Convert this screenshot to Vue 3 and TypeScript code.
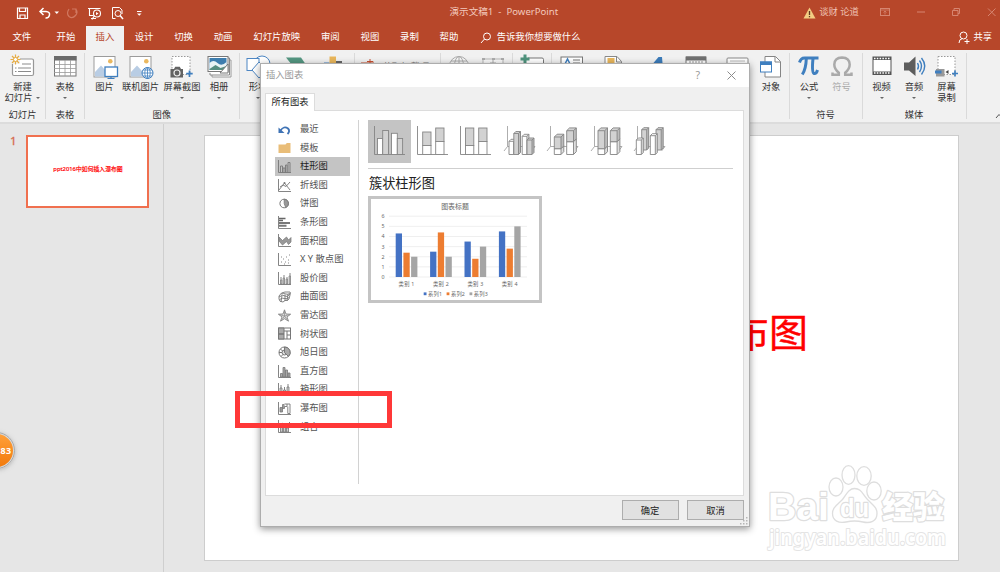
<script setup lang="ts">
interface RibbonItem {
  label: string[]
  icon: string
  width: number
  caret?: 'below' | 'inline'
  dim?: boolean
}
interface RibbonGroup {
  name: string
  width: number
  pad?: number
  items: RibbonItem[]
}

const tabs: string[] = ['文件', '开始', '插入', '设计', '切换', '动画', '幻灯片放映', '审阅', '视图', '录制', '帮助']

const groups: RibbonGroup[] = [
  { name: '幻灯片', width: 46, items: [{ label: ['新建', '幻灯片'], icon: 'newSlide', width: 45, caret: 'inline' }] },
  { name: '表格', width: 39, items: [{ label: ['表格'], icon: 'table', width: 38, caret: 'below' }] },
  {
    name: '图像', width: 154.5, pad: 2.5, items: [
      { label: ['图片'], icon: 'picture', width: 34 },
      { label: ['联机图片'], icon: 'onlinePicture', width: 38 },
      { label: ['屏幕截图'], icon: 'screenshot', width: 45, caret: 'below' },
      { label: ['相册'], icon: 'album', width: 29, caret: 'below' },
    ],
  },
  {
    name: '插图', width: 115, items: [
      { label: ['形状'], icon: 'shapes', width: 37, caret: 'below' },
      { label: ['SmartArt'], icon: 'smartArt', width: 40 },
      { label: ['图表'], icon: 'chart', width: 37 },
    ],
  },
  { name: '加载项', width: 86, pad: 4, items: [{ label: [], icon: 'store', width: 24 }] },
  {
    name: '链接', width: 72, items: [
      { label: ['链接'], icon: 'globe', width: 36, dim: true },
      { label: ['动作'], icon: 'action', width: 33, dim: true },
    ],
  },
  { name: '批注', width: 39, items: [{ label: ['批注'], icon: 'comment', width: 38 }] },
  {
    name: '文本', width: 238, items: [
      { label: ['文本框'], icon: 'textBox', width: 41, caret: 'below' },
      { label: ['页眉'], icon: 'header', width: 40 },
      { label: ['艺术字'], icon: 'wordArt', width: 42, caret: 'below' },
      { label: ['日期'], icon: 'date', width: 42 },
      { label: ['编号'], icon: 'number', width: 41 },
      { label: ['对象'], icon: 'object', width: 27 },
    ],
  },
  {
    name: '符号', width: 73, pad: 3.5, items: [
      { label: ['公式'], icon: 'pi', width: 32, caret: 'below' },
      { label: ['符号'], icon: 'omega', width: 33, dim: true },
    ],
  },
  {
    name: '媒体', width: 104, pad: 3, items: [
      { label: ['视频'], icon: 'video', width: 32, caret: 'below' },
      { label: ['音频'], icon: 'audio', width: 33, caret: 'below' },
      { label: ['屏幕', '录制'], icon: 'record', width: 32 },
    ],
  },
]

const landscape = '<rect x="1" y="1.5" width="21" height="20.5" fill="#fff" stroke="#9b9b9b"/><path d="M2 21.5V17l6-6.5 5 5.5v5.5z" fill="#b9cde4"/><circle cx="17.3" cy="6.2" r="2.3" fill="#eab85f"/>'

const ribbonIcons: Record<string, string> = {
  newSlide: '<rect x="1.5" y="4" width="21" height="16.5" rx="1.5" fill="#fff" stroke="#979797" stroke-width="1.2"/><path d="M11 9h9M7 13h13M7 16.5h13M4 13h1.5M4 16.5h1.5" stroke="#8b8b8b"/><rect x="0" y="0" width="9" height="9" fill="#f1f1f1"/><path d="M4.500-.5v10M-.5 4.500h10M1 1l7 7M8 1L1 8" stroke="#e6ac44" stroke-width="1.200"/><circle cx="4.500" cy="4.500" r="2" fill="#fff" stroke="#e6ac44"/>',
  table: '<rect x="1.500" y="1.500" width="21.500" height="19.500" fill="#fff" stroke="#777"/><rect x="1" y="1" width="22.500" height="4.500" fill="#6a6a6a"/><path d="M1 9.500h22M1 13.500h22M1 17.500h22M6.500 5v16M12 5v16M17.500 5v16" stroke="#999" stroke-width=".8"/>',
  picture: landscape + '<rect x="12" y="12" width="12.500" height="9.500" fill="#fff" stroke="#3f7fbf" stroke-width="1.300"/><path d="M18 21v2.500M14.500 23.500h7" stroke="#3f7fbf" stroke-width="1.200"/>',
  onlinePicture: landscape + '<circle cx="18.500" cy="18" r="5.500" fill="#fff" stroke="#3f7fbf"/><path d="M18.500 12.500v11M13 18h11M14 15h9M14 21h9" stroke="#3f7fbf" stroke-width=".8"/><ellipse cx="18.500" cy="18" rx="2.700" ry="5.500" fill="none" stroke="#3f7fbf" stroke-width=".8"/>',
  screenshot: '<rect x="2" y="1.500" width="18" height="18" fill="#fff" stroke="#999" stroke-dasharray="1.500 1.500"/><path d="M.5 14h3.500l1.200-2.200h4.600L11 14h2v8.500H.5z" fill="#636363"/><circle cx="7" cy="18" r="3" fill="#636363" stroke="#eee" stroke-width="1.200"/><path d="M19.500 15.500v6.500M16.200 18.700h6.500" stroke="#3f7fbf" stroke-width="1.700"/>',
  album: '<path d="M22 5h2v17H5v-2" fill="#fff" stroke="#999"/><path d="M21 3h1.500v17H3v-2" fill="#fff" stroke="#888"/><rect x="1" y="1.500" width="20" height="15" fill="#fff" stroke="#777"/><rect x="2.500" y="3" width="17" height="12" fill="#3d7dae"/><path d="M2.500 8q4-4 8 0t9-1v8h-17z" fill="#e9f2f4"/><path d="M2.500 14l6-4 5 3 6-2v4h-17z" fill="#578d80"/><path d="M13 18l8-9v9z" fill="#fff" stroke="#777"/>',
  shapes: '<circle cx="16" cy="9" r="8" fill="#fff" stroke="#4d86c3"/><rect x="1" y="3.500" width="12" height="12" fill="#fff" stroke="#4d86c3"/><path d="M13 7l8 8-8 8-7-8z" fill="#fff" stroke="#4d86c3"/>',
  smartArt: '<path d="M1 2.500h15l5.500 8L16 18H1l6-8z" fill="#549681"/>',
  chart: '<path d="M1 7.500h5.500V22H1z" fill="#4d86c3"/><path d="M6.500 1.500h6.500V22H6.500z" fill="#e9b65b"/><path d="M13 6h6v16h-6z" fill="#666"/>',
  store: '<rect x="2.500" y="8" width="10" height="9" fill="#fff" stroke="#c85132"/><path d="M8 6.500h6v6M11 4v6" fill="none" stroke="#c85132"/>',
  globe: '<circle cx="12" cy="11" r="9.500" fill="#f7f7f7" stroke="#aaa"/><path d="M12 1.500v20M2.500 11h19M4 6h16" stroke="#aaa"/><ellipse cx="12" cy="11" rx="4.500" ry="9.500" fill="none" stroke="#aaa"/>',
  action: '<rect x="2" y="4" width="20" height="16" fill="#f8f8f8" stroke="#b5b5b5"/><path d="M1 3h3v2H1zM20 3h3v2h-3zM11 3h3v2h-3z" fill="#aaa"/><path d="M12 5v6M9 8h6" stroke="#aaa"/>',
  comment: '<path d="M8 3h14q1.500 0 1.500 1.500V18H4V9" fill="#fff" stroke="#777"/><path d="M5 -.5v9M.5 4h9" stroke="#4e927c" stroke-width="3"/>',
  textBox: '<rect x="1" y="2" width="21.500" height="18" fill="#fff" stroke="#777"/><path d="M4.500 10L7.500 4l3 6" fill="none" stroke="#3f7fbf" stroke-width="1.500"/><path d="M13 5h7M13 8h7" stroke="#777"/>',
  header: '<path d="M4 1.500h12l4.500 5V22H4z" fill="#fff" stroke="#888"/><rect x="6.500" y="3" width="7" height="5" fill="#e9b65b"/><path d="M15.500 2v5h5" fill="none" stroke="#888"/>',
  wordArt: '<path d="M3 18L16.500 2h3.500l1.500 18h-4l-1-12L8 18z" fill="#3c7cba"/>',
  date: '<rect x="2" y="2" width="20" height="18" fill="#fff" stroke="#777"/><rect x="2" y="1.500" width="20" height="4" fill="#707070"/><path d="M5 7h14" stroke="#999" stroke-dasharray="2 1"/>',
  number: '<rect x="2" y="3" width="21" height="17" rx="1" fill="#fff" stroke="#888"/><path d="M5 6h15" stroke="#bbb"/>',
  object: '<path d="M6 1.500h10.500l5 5V22H6z" fill="#fff" stroke="#858585"/><path d="M16 2v5h5" fill="none" stroke="#858585"/><rect x="1.500" y="7" width="11" height="10" fill="#fff" stroke="#3f7fbf"/><rect x="1" y="6.500" width="12" height="3.500" fill="#3f7fbf"/>',
  pi: '<path d="M2.500 7.500Q3.800 3 7.500 3H21.500" fill="none" stroke="#3f7fbf" stroke-width="3"/><path d="M9.300 3.500Q9 14 5.300 19.500M16 3.500Q14.500 18 17 18.500q2.300.7 3.500-3.500" fill="none" stroke="#3f7fbf" stroke-width="3"/>',
  omega: '<path d="M2.500 17.500v2.200h6.300v-2Q4.300 14 4.300 9.500 4.500 2.700 12 2.500q7.500.2 7.700 7 0 4.500-4.500 8.200v2h6.300v-2.200" fill="none" stroke="#aaa" stroke-width="2.500"/>',
  video: '<rect x="3" y="2" width="18" height="17.500" fill="#fff" stroke="#555"/><path d="M3 3.500h18M3 18h18" stroke="#555" stroke-width="3"/><path d="M4 3.500h16M4 18h16" stroke="#fff" stroke-width="1.400" stroke-dasharray="1.500 1.300"/>',
  audio: '<path d="M2 7.500h5L13.500 1.500v19.500L7 15.500H2z" fill="#5d5d5d"/><path d="M15.500 8q2 3.200 0 6.500M17.500 5.500q4 5.500 0 11.500M19.500 3q6.500 8 0 16.500" fill="none" stroke="#3f7fbf" stroke-width="1.400"/>',
  record: '<rect x="3" y="1.500" width="17" height="18" fill="#fff" stroke="#999" stroke-dasharray="1.500 1.500"/><rect x="1" y="14" width="8.500" height="7.500" fill="#999"/><rect x="0" y="15.500" width="6.500" height="3" fill="#3f7fbf"/><path d="M13.500 15v4l-3-2z" fill="#444"/><path d="M20 15.500v6M17 18.500h6" stroke="#3f7fbf" stroke-width="1.700"/>',
}

const ax = '<path d="M.5 0v12.500H13" fill="none" stroke="#777" stroke-width=".9"/>'

const chartKinds: { name: string; icon: string }[] = [
  { name: '最近', icon: '<path d="M2.500 7.500Q6 2.500 10 5.500q2.500 2.500-.5 5.500" fill="none" stroke="#3f73b5" stroke-width="1.800"/><path d="M.5 4.500v5.500h6z" fill="#3f73b5"/>' },
  { name: '模板', icon: '<path d="M.5 3.500h7l1.300-1.500h3.700V12H.5z" fill="#e9bd78"/>' },
  { name: '柱形图', icon: ax + '<path d="M2.500 12.500V6h2v6.500M5 12.500V8h2v4.500M7.500 12.500V5h1.500v7.500M10 12.500V2.500h2v10" fill="none" stroke="#777" stroke-width=".9"/>' },
  { name: '折线图', icon: ax + '<path d="M1 11l5.500-7 5.500 7M2 8l3-2 3 1.500L12 3" fill="none" stroke="#777" stroke-width=".9"/><circle cx="6.500" cy="4" r="1" fill="#777"/>' },
  { name: '饼图', icon: '<circle cx="6.200" cy="6.500" r="4.300" fill="#fff" stroke="#777"/><path d="M6.200 2.200a4.300 4.300 0 0 1 1.500 8.300l-1.500-4z" fill="#999" stroke="#777" stroke-width=".8"/>' },
  { name: '条形图', icon: ax + '<path d="M1 2.500h6.500M1 4.500h4" stroke="#666" stroke-width="1.500"/><path d="M1 7h11M1 9.800h7.500" stroke="#777" stroke-width="2"/>' },
  { name: '面积图', icon: ax + '<path d="M1 3l3.500 3.500L8.500 3l2 3L13 3.500V8l-2.500 2.500L8.500 7.500l-4 3.500L1 7z" fill="#999" stroke="#777" stroke-width=".7"/>' },
  { name: 'X Y 散点图', icon: ax + '<path d="M3 9h1M5 6h1M7 9h1M8 4h1M10 7h1M11 2h1M3 4h1M6 11h1M10 10h1" stroke="#888" stroke-width="1.100"/>' },
  { name: '股价图', icon: ax + '<path d="M3 5v7M6 3v9M9 5v7M12 1v11" stroke="#777" stroke-width=".9"/><path d="M2.500 8h1.500v4H2.500zM5 6h1.500v6H5zM8 7h1.500v5H8zM11 4h1.500v8H11z" fill="#bbb" stroke="#777" stroke-width=".6"/>' },
  { name: '曲面图', icon: '<path d="M1 6Q3 2 7 2h5q1 0 0 3l-1 4q-1 2-4 1.500L5 12Q1 12 1 9zM1 7q4-3 6-1t5-2M3 4q3-1 5 0t4-1M4 5.500L3 12M7 4.500L7 11M10 4l-1 7M1.500 9.500q3-2 5.500-1t4-1" fill="none" stroke="#777" stroke-width=".9"/>' },
  { name: '雷达图', icon: '<path d="M6.500.8l1.500 4.200 4.700.2-3.700 2.700 1.500 4.300-4-2.500-4 2.500L4 7.900.3 5.200 5 5z" fill="#ddd" stroke="#888" stroke-width=".9"/><path d="M6.500 1v6l5.500-1.500M6.500 7L10 12M6.500 7L3 12M6.500 7L1 5.500" fill="none" stroke="#888" stroke-width=".7"/>' },
  { name: '树状图', icon: '<rect x=".5" y="1" width="12" height="11" fill="#fff" stroke="#777"/><path d="M.5 1h5.500v6H.5zM.5 7h5.500v5H.5z" fill="#aaa" stroke="#777"/><path d="M6 4h6.500M9 4v8M9 8h3.500" stroke="#777"/>' },
  { name: '旭日图', icon: '<circle cx="6.500" cy="6.500" r="5.500" fill="#fff" stroke="#777"/><circle cx="6.500" cy="6.500" r="2.500" fill="#ddd" stroke="#777"/><path d="M6.500 1a5.500 5.500 0 0 1 4 9.500L6.500 6.500zM1 6.500h3M3 10.500l2-2M2.500 3l2 2" fill="#aaa" stroke="#777"/>' },
  { name: '直方图', icon: ax + '<path d="M2.500 12V8.500h2V12zM5 12V2.500h2V12zM7.500 12V5h2V12zM10 12V8h2v4z" fill="#aaa" stroke="#777" stroke-width=".8"/>' },
  { name: '箱形图', icon: ax + '<path d="M3 2v10M6.500 4v8M10 1v11" stroke="#777" stroke-width=".9"/><path d="M2 5h2v4H2zM5.500 7h2v4h-2zM9 4h2v5H9z" fill="#ccc" stroke="#777" stroke-width=".8"/>' },
  { name: '瀑布图', icon: ax + '<path d="M2 5.500h2.500v4.500H2zM4.500 2.500h2v4h-2z" fill="#999" stroke="#777" stroke-width=".8"/><path d="M6.500 2h2.500v2.500H6.500M9 2h3v9.500H9.800V4.500" fill="#fff" stroke="#777" stroke-width=".9"/>' },
  { name: '组合', icon: ax + '<path d="M2.500 12V7h2v5zM5.500 12V5h2v7zM8.500 12V8h2v4z" fill="#ccc" stroke="#777" stroke-width=".8"/><path d="M1 6l4-3 3 3 4-4" fill="none" stroke="#777"/>' },
]

const G = '#d2d2d2'
const W = '#ffffff'
const flat = (x: number, y: number, w: number, bottom: number, fill: string): string =>
  `<rect x="${x}" y="${y}" width="${w}" height="${bottom - y}" fill="${fill}" stroke="#858585" stroke-width=".9"/>`
const solid = (x: number, y: number, w: number, bottom: number, fill: string, d = 2.8): string =>
  `<path d="M${x} ${y}l${d} ${-d}h${w}v${bottom - y}l${-d} ${d}h${-w}z" fill="${fill}" stroke="#858585" stroke-width=".9"/>` +
  `<path d="M${x + w} ${y}l${d} ${-d}v${bottom - y}l${-d} ${d}z" fill="rgba(110,110,110,.22)"/>` +
  `<path d="M${x} ${y}h${w}v${bottom - y}M${x + w} ${y}l${d} ${-d}" fill="none" stroke="#858585" stroke-width=".9"/>`
const axes = '<path d="M.5 0v28.500H31" fill="none" stroke="#858585" stroke-width=".9"/>'
const axes3d = '<path d="M3.500 0v20.500L0 25M3.500 20.500H31L27.500 25" fill="none" stroke="#999" stroke-width=".8"/>'

const variants: string[] = [
  axes + flat(3.5, 12.5, 5.2, 28.5, W) + flat(8.7, 4.5, 5.8, 28.5, G) + flat(17.5, 7.3, 5.8, 28.5, W) + flat(23.3, 12.5, 5.3, 28.5, G),
  axes + flat(5.7, 6, 8.3, 19.5, G) + flat(5.7, 19.5, 8.3, 28.5, W) + flat(18.7, 2, 8.3, 15.5, G) + flat(18.7, 15.5, 8.3, 28.5, W),
  axes + flat(5.5, 2, 8.3, 19.5, G) + flat(5.5, 19.5, 8.3, 28.5, W) + flat(18.7, 2, 8.3, 15.5, G) + flat(18.7, 15.5, 8.3, 28.5, W),
  axes3d + solid(5, 15.3, 4.7, 28.5, W, 2) + solid(9.8, 7.5, 4.7, 28.5, G, 2) + solid(18.2, 10.3, 4.7, 28.5, W, 2) + solid(23, 14, 5, 28.5, G, 2),
  axes3d + solid(7.3, 22.7, 6.7, 28.5, W) + solid(7.3, 11, 6.7, 22.7, G) + solid(19.7, 15.7, 6.8, 28.5, W) + solid(19.7, 4.7, 6.8, 15.7, G),
  axes3d + solid(7, 22.7, 6.7, 28.5, W) + solid(7, 4.7, 6.7, 22.7, G) + solid(19.3, 15.7, 6.8, 28.5, W) + solid(19.3, 4.7, 6.8, 15.7, G),
  axes3d + solid(7.7, 3.7, 5, 24, G, 2) + solid(2.3, 14, 5, 28.5, W, 2) + solid(22, 3.7, 5.2, 24, G, 2) + solid(16.3, 9.7, 5, 28.5, W, 2),
]

const colors: string[] = ['#4472c4', '#ed7d31', '#a5a5a5']
const data: number[][] = [[4.3, 2.4, 2], [2.5, 4.4, 2], [3.5, 1.8, 3], [4.5, 2.8, 5]]
const unit = 10.13
const base = 78
</script>

<template>
  <div class="window">
    <header class="titlebar">
      <svg class="quick" width="150" height="25" viewBox="0 0 150 25" fill="none" stroke="#fff">
        <path d="M17.500 8h10v10.500h-10zM19.500 8v3.500h6V8M20 18.500v-3.500h5v3.500" stroke-width="1.200" />
        <path d="M43.500 8L40 11.500l3.500 3.500M40 11.500h6q4 .3 3.500 3.500t-4 3" stroke-width="1.500" />
        <path d="M54.500 11.500h4.500l-2.200 2.500z" fill="#fff" stroke="none" />
        <path d="M69 9q-3 4.500 0 7.500 3.500 2.500 6.500-1t0-6.500M72 9h4V13" stroke="#d17861" stroke-width="1.200" />
        <path d="M88 8.500h12.500M89.500 9v6.500h4M94.500 15.500l-2.500 4M91 18.500h5" stroke-width="1.100" />
        <circle cx="97" cy="13.500" r="3.500" stroke-width="1.100" />
        <path d="M96 12v3.300l2.500-1.700z" fill="#fff" stroke="none" />
        <path d="M112.500 18.500v-11h7l2.500 2.500v4M112.500 18.500h3" />
        <circle cx="118" cy="13.500" r="3" />
        <path d="M120 15.500l3 3.500" stroke-width="1.500" />
        <path d="M137 11.500h4.500" />
        <path d="M137 13.500h4.500l-2.200 2.300z" fill="#fff" stroke="none" />
      </svg>
      <div class="doc-title">演示文稿1&nbsp; -&nbsp; PowerPoint</div>
      <svg class="warning" width="13" height="12" viewBox="0 0 13 12">
        <path d="M6.500.5L12.500 11.500H.5z" fill="#f3cd83" />
        <path d="M6.500 4v4M6.500 9v1.300" stroke="#5c3b24" stroke-width="1.300" />
      </svg>
      <span class="account">谈财 论道</span>
      <svg class="controls" width="120" height="25" viewBox="0 0 120 25" fill="none" stroke="#d68570">
        <rect x="0.500" y="8.500" width="9" height="7" />
        <path d="M0 10h10M5 14.500v-3.500M3.500 12.500L5 11l1.500 1.500" stroke-width=".8" />
        <path d="M37 12h8M72.500 10.500h5.500v5h-5.500zM74 10V8.500h5.500v5H78M108 8.500l7.500 7.500M115.500 8.500L108 16" />
      </svg>
    </header>

    <nav class="tabs">
      <div v-for="(tab, i) in tabs" :key="tab" class="tab" :class="{ active: tab === '插入', file: i === 0 }">{{ tab }}</div>
      <svg class="search" width="12" height="12" viewBox="0 0 12 12" fill="none" stroke="#fff">
        <circle cx="7" cy="4.500" r="3.500" /><path d="M4.500 7L1 11" />
      </svg>
      <span class="tell">告诉我你想要做什么</span>
      <svg class="person" width="12" height="13" viewBox="0 0 12 13" fill="none" stroke="#fff">
        <circle cx="5.500" cy="4.500" r="3.500" /><path d="M1 12q0-4 3.500-4.500M6.500 10.500h5M9 8v5" />
      </svg>
      <span class="share">共享</span>
    </nav>

    <section class="ribbon">
      <div v-for="g in groups" :key="g.name" class="group" :style="{ width: g.width + 'px' }">
        <div class="tools" :style="{ paddingLeft: (g.pad ?? 0) + 'px' }">
          <div v-for="it in g.items" :key="it.icon" class="tool" :class="{ dim: it.dim }" :style="{ width: it.width + 'px' }">
            <svg width="24" height="24" viewBox="0 0 24 24" v-html="ribbonIcons[it.icon]" />
            <div v-for="(line, k) in it.label" :key="line" class="label">
              {{ line }}<i v-if="it.caret === 'inline' && k === 1" class="caret side" />
            </div>
            <i v-if="it.caret === 'below'" class="caret" />
          </div>
          <span v-if="g.name === '加载项'" class="addin">获取加载项</span>
        </div>
        <div class="group-name">{{ g.name }}</div>
      </div>
      <svg class="collapse" width="8" height="6" viewBox="0 0 8 6" fill="none" stroke="#555"><path d="M1 5l3-3.500L7.500 5" /></svg>
    </section>

    <main class="workspace">
      <aside class="thumbs">
        <span class="index">1</span>
        <div class="thumb"><span>ppt2016中如何插入瀑布图</span></div>
      </aside>
      <div class="canvas">
        <div class="slide">
          <h1>ppt2016中如何插入瀑布图</h1>
          <svg class="watermark" width="190" height="94" viewBox="0 0 190 94" fill="#fff" stroke="#dedede" stroke-width="1.300">
            <g class="brand">
              <text x="3" y="57" font-size="39" textLength="61" lengthAdjust="spacingAndGlyphs">Bai</text>
              <ellipse cx="71" cy="24" rx="7" ry="9" />
              <ellipse cx="83.500" cy="12" rx="6.500" ry="9.300" />
              <ellipse cx="99" cy="13" rx="7.200" ry="9.300" />
              <ellipse cx="109" cy="28" rx="7.200" ry="9" />
              <path d="M89.500 25.500c7 0 8 6 13 11 6 6 9.500 8 9.500 14 0 8-7 10-14 8.500q-8.500-2-17 0c-7 1.500-13.500-1-13.500-8.500 0-6 4-8 10-14 4-5 6-11 12-11z" />
              <text x="75" y="54" font-size="25" textLength="29" lengthAdjust="spacingAndGlyphs">du</text>
              <text class="cjk" x="117" y="55" font-size="31" textLength="62">经验</text>
            </g>
            <text class="site" x="4" y="82" font-size="21.500" textLength="177" lengthAdjust="spacingAndGlyphs">jingyan.baidu.com</text>
          </svg>
        </div>
      </div>
    </main>

    <div class="ball">83</div>

    <div class="dialog">
      <div class="dialog-title">
        <span>插入图表</span>
        <span class="help">?</span>
        <svg width="9" height="9" viewBox="0 0 9 9" stroke="#8b8b8b"><path d="M.5.5l8 8M8.500.5l-8 8" /></svg>
      </div>
      <div class="dialog-tab">所有图表</div>
      <div class="panel">
        <ul class="kinds">
          <li v-for="k in chartKinds" :key="k.name" :class="{ selected: k.name === '柱形图' }">
            <svg width="13" height="13" viewBox="0 0 13 13" v-html="k.icon" />
            <span>{{ k.name }}</span>
          </li>
        </ul>
        <div class="detail">
          <div class="variants">
            <div v-for="(v, i) in variants" :key="i" class="variant" :class="{ selected: i === 0 }">
              <svg width="32" height="31" viewBox="0 0 32 31" v-html="v" />
            </div>
          </div>
          <h2>簇状柱形图</h2>
          <div class="preview">
            <svg width="168" height="101" viewBox="0 0 168 101" fill="#666">
              <text x="84" y="9.500" font-size="6.900" text-anchor="middle">图表标题</text>
              <g v-for="n in 7" :key="n">
                <path :d="`M18 ${base - (n - 1) * unit}H156`" stroke="#e8e8e8" stroke-width=".7" />
                <text x="12" :y="base + 2 - (n - 1) * unit" font-size="5.300" text-anchor="middle">{{ n - 1 }}</text>
              </g>
              <g v-for="(row, i) in data" :key="i">
                <rect v-for="(v, j) in row" :key="j" :x="24.7 + i * 34.4 + j * 7.7" :y="base - v * unit" width="6.300" :height="v * unit" :fill="colors[j]" />
                <text :x="35.5 + i * 34.4" y="87.400" font-size="5.300" text-anchor="middle" textLength="15.800">类别 {{ i + 1 }}</text>
              </g>
              <g v-for="(c, j) in colors" :key="c">
                <rect :x="52.7 + j * 22.9" y="93.400" width="2.800" height="2.800" :fill="c" />
                <text :x="57 + j * 22.9" y="96.700" font-size="5.300" textLength="14">系列{{ j + 1 }}</text>
              </g>
            </svg>
          </div>
        </div>
      </div>
      <div class="actions">
        <button>确定</button>
        <button>取消</button>
      </div>
      <svg class="grip" width="8" height="8" viewBox="0 0 8 8" fill="#b5b5b5">
        <path d="M6 0h1.500v1.500H6zM3 3h1.500v1.500H3zM6 3h1.500v1.500H6zM0 6h1.500v1.500H0zM3 6h1.500v1.500H3zM6 6h1.500v1.500H6z" />
      </svg>
    </div>

    <div class="marker" />
  </div>
</template>

<style>
body { margin: 0; overflow: hidden; }
</style>

<style scoped>
.window {
  position: relative;
  width: 1000px;
  height: 572px;
  overflow: hidden;
  display: flex;
  flex-direction: column;
  background: #e6e6e6;
  font: 9.3px/12px "Noto Sans", "Noto Sans CJK SC", sans-serif;
  color: #333;
  white-space: nowrap;
}
.window svg { flex: none; display: block; overflow: visible; }
.titlebar { height: 25px; background: #b7472a; display: flex; align-items: center; color: #f3c9bd; flex: none; }
.doc-title { margin-left: 299.5px; width: 354.5px; font-size: 9.6px; margin-top: -1px; }
.account { width: 61px; margin: -1px 0 0 3px; color: #f0c3b5; }
.tabs { height: 25px; background: #b7472a; display: flex; align-items: center; color: #fff; flex: none; }
.tab { height: 24px; margin-top: 1px; line-height: 22px; padding: 0 10.4px; font-size: 9.4px; }
.tab.file { padding: 0 15px 0 12.4px; }
.tab.active { background: #f1f1f1; color: #b7472a; padding: 0 9.9px; }
.search { margin-left: 11px; }
.tell { margin: -1px 0 0 5px; font-size: 9.3px; }
.person { margin-left: auto; }
.share { margin: 0 8px 2px 3px; font-size: 9.3px; }
.ribbon { height: 72px; background: #f1f1f1; border-bottom: 2px solid #dcdcdc; display: flex; flex: none; position: relative; }
.group { flex: none; box-sizing: border-box; height: 66px; margin-top: 3px; border-right: 1px solid #dadada; display: flex; flex-direction: column; }
.tools { display: flex; height: 55px; padding-top: 2px; box-sizing: border-box; flex: none; }
.tool { flex: none; display: flex; flex-direction: column; align-items: center; }
.label { line-height: 11.6px; position: relative; display: flex; align-items: center; }
.tool svg + .label { margin-top: 1.5px; }
.dim { color: #aaa; }
.caret { border: 2px solid transparent; border-top: 2.5px solid #666; border-bottom: 0; margin-top: 4.5px; width: 0; height: 0; }
.caret.side { margin: 0 0 0 4px; }
.addin { padding-top: 6px; color: #777; }
.group-name { text-align: center; line-height: 13px; }
.collapse { margin: 63px 0 0 28.5px; }
.workspace { flex: 1; display: flex; min-height: 0; }
.thumbs { width: 164px; border-right: 1.5px solid #cfcfcf; display: flex; align-items: flex-start; box-sizing: border-box; }
.index { width: 16px; padding-left: 10px; font-size: 11.5px; color: #d66a4e; margin-top: 11px; -webkit-text-stroke: .3px #d66a4e; }
.thumb { width: 119px; height: 69px; margin-top: 11px; border: 2px solid #f0704f; background: #fff; display: flex; align-items: center; justify-content: center; color: #f00; font-size: 5.85px; line-height: 8px; -webkit-text-stroke: .2px #f00; }
.thumb span { margin-top: -5px; margin-left: 1px; }
.canvas { padding: 11px 0 0 40px; }
.slide { position: relative; width: 753px; height: 424px; background: #fff; border: 1px solid #cdcdcd; }
.slide h1 { margin: 171px 0 0; padding-right: 150px; text-align: right; font-weight: 400; font-size: 39px; line-height: 50px; color: #f00; -webkit-text-stroke: .4px #f00; }
.watermark { position: absolute; left: 560px; top: 327px; font-family: "Noto Sans", sans-serif; }
.watermark text { paint-order: stroke; stroke-width: 2.4px; stroke-linejoin: round; font-weight: 700; }
.brand text { font-family: "Liberation Sans", sans-serif; }
.brand text.cjk { font-family: "Noto Sans CJK SC", sans-serif; font-weight: 900; }
.watermark .site { font-weight: 600; stroke-width: 2px; stroke: #e4e4e4; }
.ball { position: absolute; left: -22px; top: 432px; width: 33px; height: 33px; border: 2px solid #d8d8d8; outline: 1px solid #aaa; outline-offset: -1px; border-radius: 50%; background: linear-gradient(#ffa03a, #f27a0c); color: #fff; font: 700 9px/33px "Noto Sans", sans-serif; text-align: right; padding: 0; box-shadow: 0 1px 4px #8888; letter-spacing: .3px; text-indent: 0; }
.ball::after { content: ""; display: inline-block; width: 1.500px; }
.dialog { position: absolute; left: 260px; top: 63px; width: 490px; height: 464px; box-sizing: border-box; border: 1px solid #adadad; background: #f0f0f0; box-shadow: 0 2px 7px rgba(0, 0, 0, .42); display: flex; flex-direction: column; }
.dialog-title { height: 23px; background: #fff; color: #999; display: flex; align-items: center; padding: 0 13px 1px 5px; box-sizing: border-box; flex: none; }
.help { margin-left: auto; margin-right: 27px; font-size: 10.500px; }
.dialog-tab { margin: 6px 0 -1px 4px; width: 48px; height: 17px; border: 1px solid #dcdcdc; border-bottom: 0; background: #fff; color: #222; line-height: 15px; text-align: center; position: relative; z-index: 1; box-sizing: content-box; flex: none; font-size: 9.300px; }
.panel { margin-left: 4px; width: 477px; height: 384px; border: 1px solid #dcdcdc; background: #fff; display: flex; flex: none; }
.kinds { list-style: none; margin: 9px 0 0 9px; padding: 0 8px 0 0; width: 75px; height: 364px; border-right: 1.500px solid #d2d2d2; }
.kinds li { height: 18.600px; display: flex; align-items: center; padding-left: 3px; color: #555; }
.kinds li span { margin-left: 9px; margin-top: -.5px; }
.kinds li.selected { background: #c4c4c4; color: #222; }
.detail { margin: 9px 0 0 9px; width: 365px; }
.variants { display: flex; height: 47.500px; border-bottom: 1px solid #cfcfcf; }
.variant { flex: none; width: 43.400px; height: 43px; display: flex; align-items: center; justify-content: center; }
.variant.selected { background: #c4c4c4; }
.detail h2 { margin: 6px 0 5px 1px; font-size: 13.200px; line-height: 16px; font-weight: 400; color: #222; }
.preview { width: 168px; height: 101px; border: 3px solid #c4c4c4; }
.actions { display: flex; justify-content: flex-end; gap: 8.500px; margin: 4px 5px 0 0; }
.actions button { width: 57px; height: 20px; padding: 0; border: 1px solid #adadad; background: #e1e1e1; font: inherit; color: #222; line-height: 17px; }
.grip { position: absolute; right: 1px; bottom: 1px; }
.marker { position: absolute; left: 235px; top: 391px; width: 147px; height: 27px; border: 5px solid #ff3838; }
</style>
